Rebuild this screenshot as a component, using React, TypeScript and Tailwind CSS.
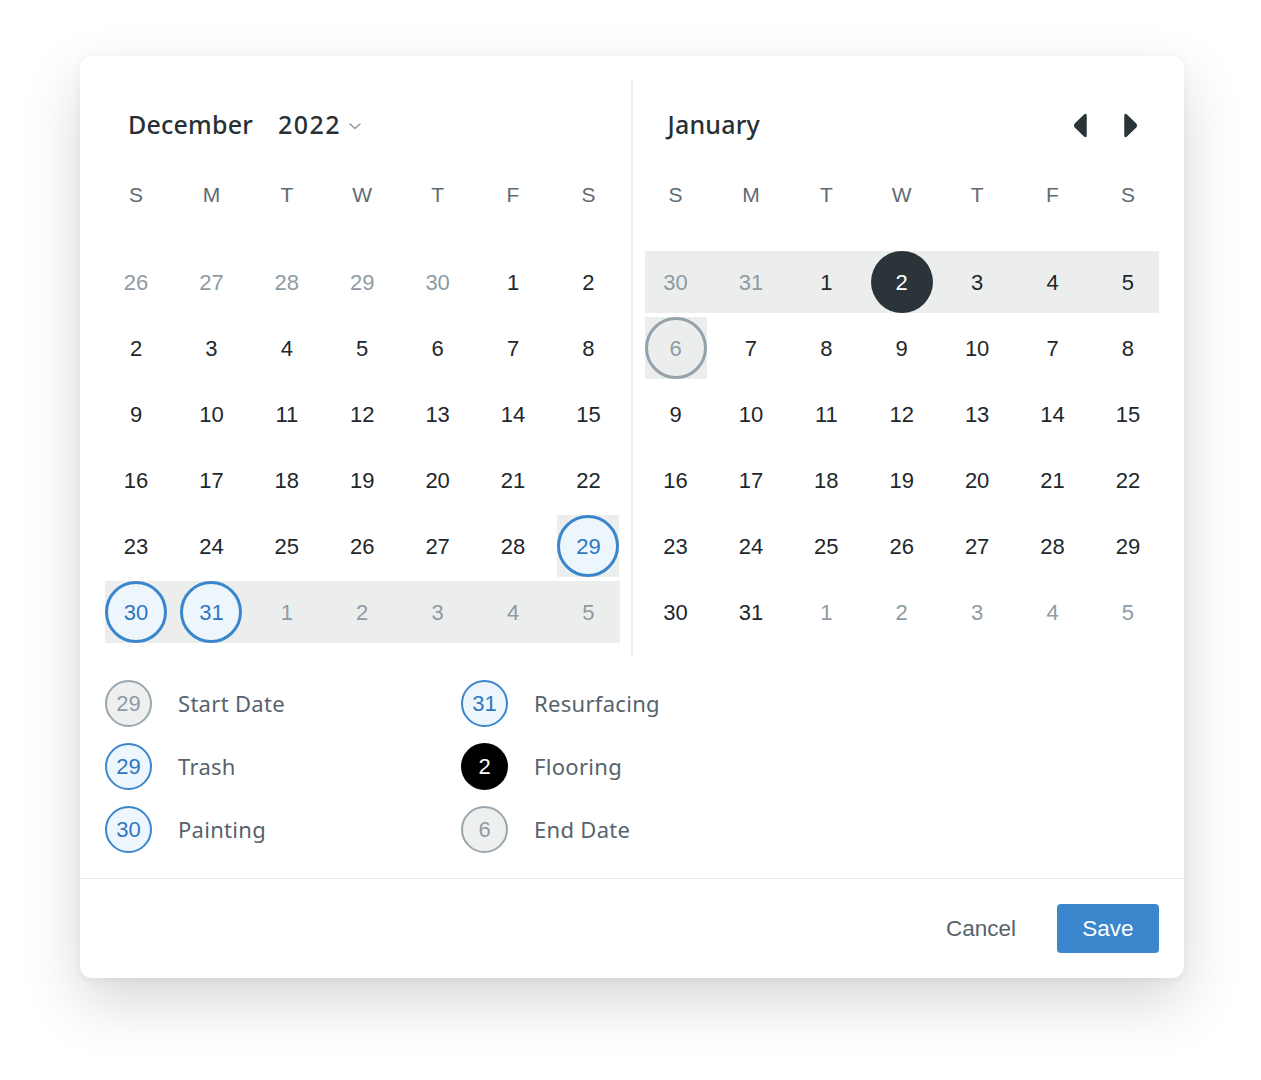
import React from "react";

type Cell = {
  n: number;
  muted?: boolean;
  kind?: "blue" | "dark" | "ring";
  bg?: boolean;
};

const NUM_FONT = { fontFamily: '"Liberation Sans", Arial, sans-serif' };
const HEAD_FONT = { fontFamily: '"Noto Sans", "Open Sans", sans-serif' };

function DayCell({ c }: { c: Cell }) {
  let inner = "w-[62px] h-[62px] flex items-center justify-center rounded-full text-[22px]";
  if (c.kind === "blue") inner += " border-[3px] border-[#3a86cc] bg-[#eef6fd] text-[#2f78c0]";
  else if (c.kind === "dark") inner += " bg-[#2b3539] text-white";
  else if (c.kind === "ring") inner += " border-[3px] border-[#93a2ab] text-[#8e9ba4]";
  else if (c.muted) inner += " text-[#8e9ba4]";
  else inner += " text-[#1e272c]";
  return (
    <div className={"w-[62px] h-[62px] " + (c.bg ? "bg-[#eceeee]" : "")}>
      <div className={inner}>{c.n}</div>
    </div>
  );
}

function Row({ cells, band }: { cells: Cell[]; band?: boolean }) {
  return (
    <div className={"flex justify-between h-[62px] " + (band ? "bg-[#eceeee]" : "")}>
      {cells.map((c, i) => (
        <DayCell key={i} c={c} />
      ))}
    </div>
  );
}

const WEEK = ["S", "M", "T", "W", "T", "F", "S"];

function Weekdays() {
  return (
    <div className="flex justify-between h-[50px] items-center">
      {WEEK.map((d, i) => (
        <div key={i} className="w-[62px] text-center text-[21px] text-[#5f6b73]">
          {d}
        </div>
      ))}
    </div>
  );
}

const r = (arr: (number | Cell)[]): Cell[] => arr.map((x) => (typeof x === "number" ? { n: x } : x));

const dec: { cells: Cell[]; band?: boolean }[] = [
  { cells: r([{ n: 26, muted: true }, { n: 27, muted: true }, { n: 28, muted: true }, { n: 29, muted: true }, { n: 30, muted: true }, 1, 2]) },
  { cells: r([2, 3, 4, 5, 6, 7, 8]) },
  { cells: r([9, 10, 11, 12, 13, 14, 15]) },
  { cells: r([16, 17, 18, 19, 20, 21, 22]) },
  { cells: r([23, 24, 25, 26, 27, 28, { n: 29, kind: "blue", bg: true }]) },
  {
    band: true,
    cells: r([
      { n: 30, kind: "blue" },
      { n: 31, kind: "blue" },
      { n: 1, muted: true },
      { n: 2, muted: true },
      { n: 3, muted: true },
      { n: 4, muted: true },
      { n: 5, muted: true },
    ]),
  },
];

const jan: { cells: Cell[]; band?: boolean }[] = [
  { band: true, cells: r([{ n: 30, muted: true }, { n: 31, muted: true }, 1, { n: 2, kind: "dark" }, 3, 4, 5]) },
  { cells: r([{ n: 6, kind: "ring", bg: true }, 7, 8, 9, 10, 7, 8]) },
  { cells: r([9, 10, 11, 12, 13, 14, 15]) },
  { cells: r([16, 17, 18, 19, 20, 21, 22]) },
  { cells: r([23, 24, 25, 26, 27, 28, 29]) },
  { cells: r([30, 31, { n: 1, muted: true }, { n: 2, muted: true }, { n: 3, muted: true }, { n: 4, muted: true }, { n: 5, muted: true }]) },
];

function Grid({ rows }: { rows: { cells: Cell[]; band?: boolean }[] }) {
  return (
    <div className="flex flex-col gap-[4px] mt-[31px]" style={NUM_FONT}>
      {rows.map((row, i) => (
        <Row key={i} cells={row.cells} band={row.band} />
      ))}
    </div>
  );
}

function LegendItem({ n, label, kind }: { n: number; label: string; kind: "gray" | "blue" | "black" }) {
  let c = "w-[47px] h-[47px] rounded-full flex items-center justify-center text-[22px] ";
  if (kind === "gray") c += "border-2 border-[#9aa6ae] bg-[#eef0f0] text-[#8e9ba4]";
  else if (kind === "blue") c += "border-2 border-[#3a86cc] bg-[#eef6fd] text-[#2f78c0]";
  else c += "bg-black text-white";
  return (
    <div className="flex items-center h-[47px]">
      <div className={c} style={NUM_FONT}>
        {n}
      </div>
      <div className="ml-[26px] text-[22px] text-[#56636c] tracking-[0.3px]" style={HEAD_FONT}>
        {label}
      </div>
    </div>
  );
}

export default function App() {
  return (
    <div className="w-[1261px] h-[1080px] bg-white pt-[56px] pl-[80px]">
      <div className="w-[1104px] h-[922px] bg-white rounded-[12px] shadow-[0_24px_60px_rgba(0,0,0,0.16),0_2px_10px_rgba(0,0,0,0.05)] flex flex-col">
        <div className="flex pt-[24px] px-[25px]">
          {/* Left calendar */}
          <div className="w-[515px] pb-[12px]">
            <div className="h-[90px] flex items-center pl-[23px]" style={HEAD_FONT}>
              <span className="text-[25px] font-medium text-[#263035] tracking-[0.2px]">December</span>
              <span className="ml-[25px] text-[25px] font-medium text-[#263035] tracking-[1.5px]">2022</span>
              <svg className="ml-[7px] mt-[2px]" width="14" height="10" viewBox="0 0 14 10">
                <path d="M2 3 L7 7.5 L12 3" fill="none" stroke="#8e9ba4" strokeWidth="1.5" strokeLinecap="round" />
              </svg>
            </div>
            <div style={NUM_FONT}>
              <Weekdays />
            </div>
            <Grid rows={dec} />
          </div>
          <div className="ml-[11px] w-[2px] bg-[#e6edf2]" />
          <div className="ml-[12px] w-[515px] pb-[12px]">
            <div className="h-[90px] flex items-center justify-between pl-[23px] pr-[21px]" style={HEAD_FONT}>
              <span className="text-[25px] font-medium text-[#263035] tracking-[0.2px]">January</span>
              <div className="flex items-center gap-[35px]">
                <svg width="15" height="25" viewBox="0 0 15 25">
                  <path d="M13 2.5 Q13 1 11.8 1.8 L2.2 11 Q1 12.5 2.2 14 L11.8 23.2 Q13 24 13 22.5 Z" fill="#2b3539" stroke="#2b3539" strokeWidth="1.5" strokeLinejoin="round" />
                </svg>
                <svg width="15" height="25" viewBox="0 0 15 25">
                  <path d="M2 2.5 Q2 1 3.2 1.8 L12.8 11 Q14 12.5 12.8 14 L3.2 23.2 Q2 24 2 22.5 Z" fill="#2b3539" stroke="#2b3539" strokeWidth="1.5" strokeLinejoin="round" />
                </svg>
              </div>
            </div>
            <div style={NUM_FONT}>
              <Weekdays />
            </div>
            <Grid rows={jan} />
          </div>
        </div>

        {/* Legend */}
        <div className="px-[25px] mt-[25px] grid grid-cols-[356px_356px] gap-y-[16px]">
          <LegendItem n={29} label="Start Date" kind="gray" />
          <LegendItem n={31} label="Resurfacing" kind="blue" />
          <LegendItem n={29} label="Trash" kind="blue" />
          <LegendItem n={2} label="Flooring" kind="black" />
          <LegendItem n={30} label="Painting" kind="blue" />
          <LegendItem n={6} label="End Date" kind="gray" />
        </div>

        <div className="mt-[25px] border-t border-[#e6ebee] flex-1 flex items-center justify-end pr-[25px]">
          <button className="text-[22.5px] text-[#56636c] mr-[41px]" style={NUM_FONT}>
            Cancel
          </button>
          <button
            className="w-[102px] h-[49px] rounded-[4px] bg-[#3b86cc] text-white text-[22.5px]"
            style={NUM_FONT}
          >
            Save
          </button>
        </div>
      </div>
    </div>
  );
}
